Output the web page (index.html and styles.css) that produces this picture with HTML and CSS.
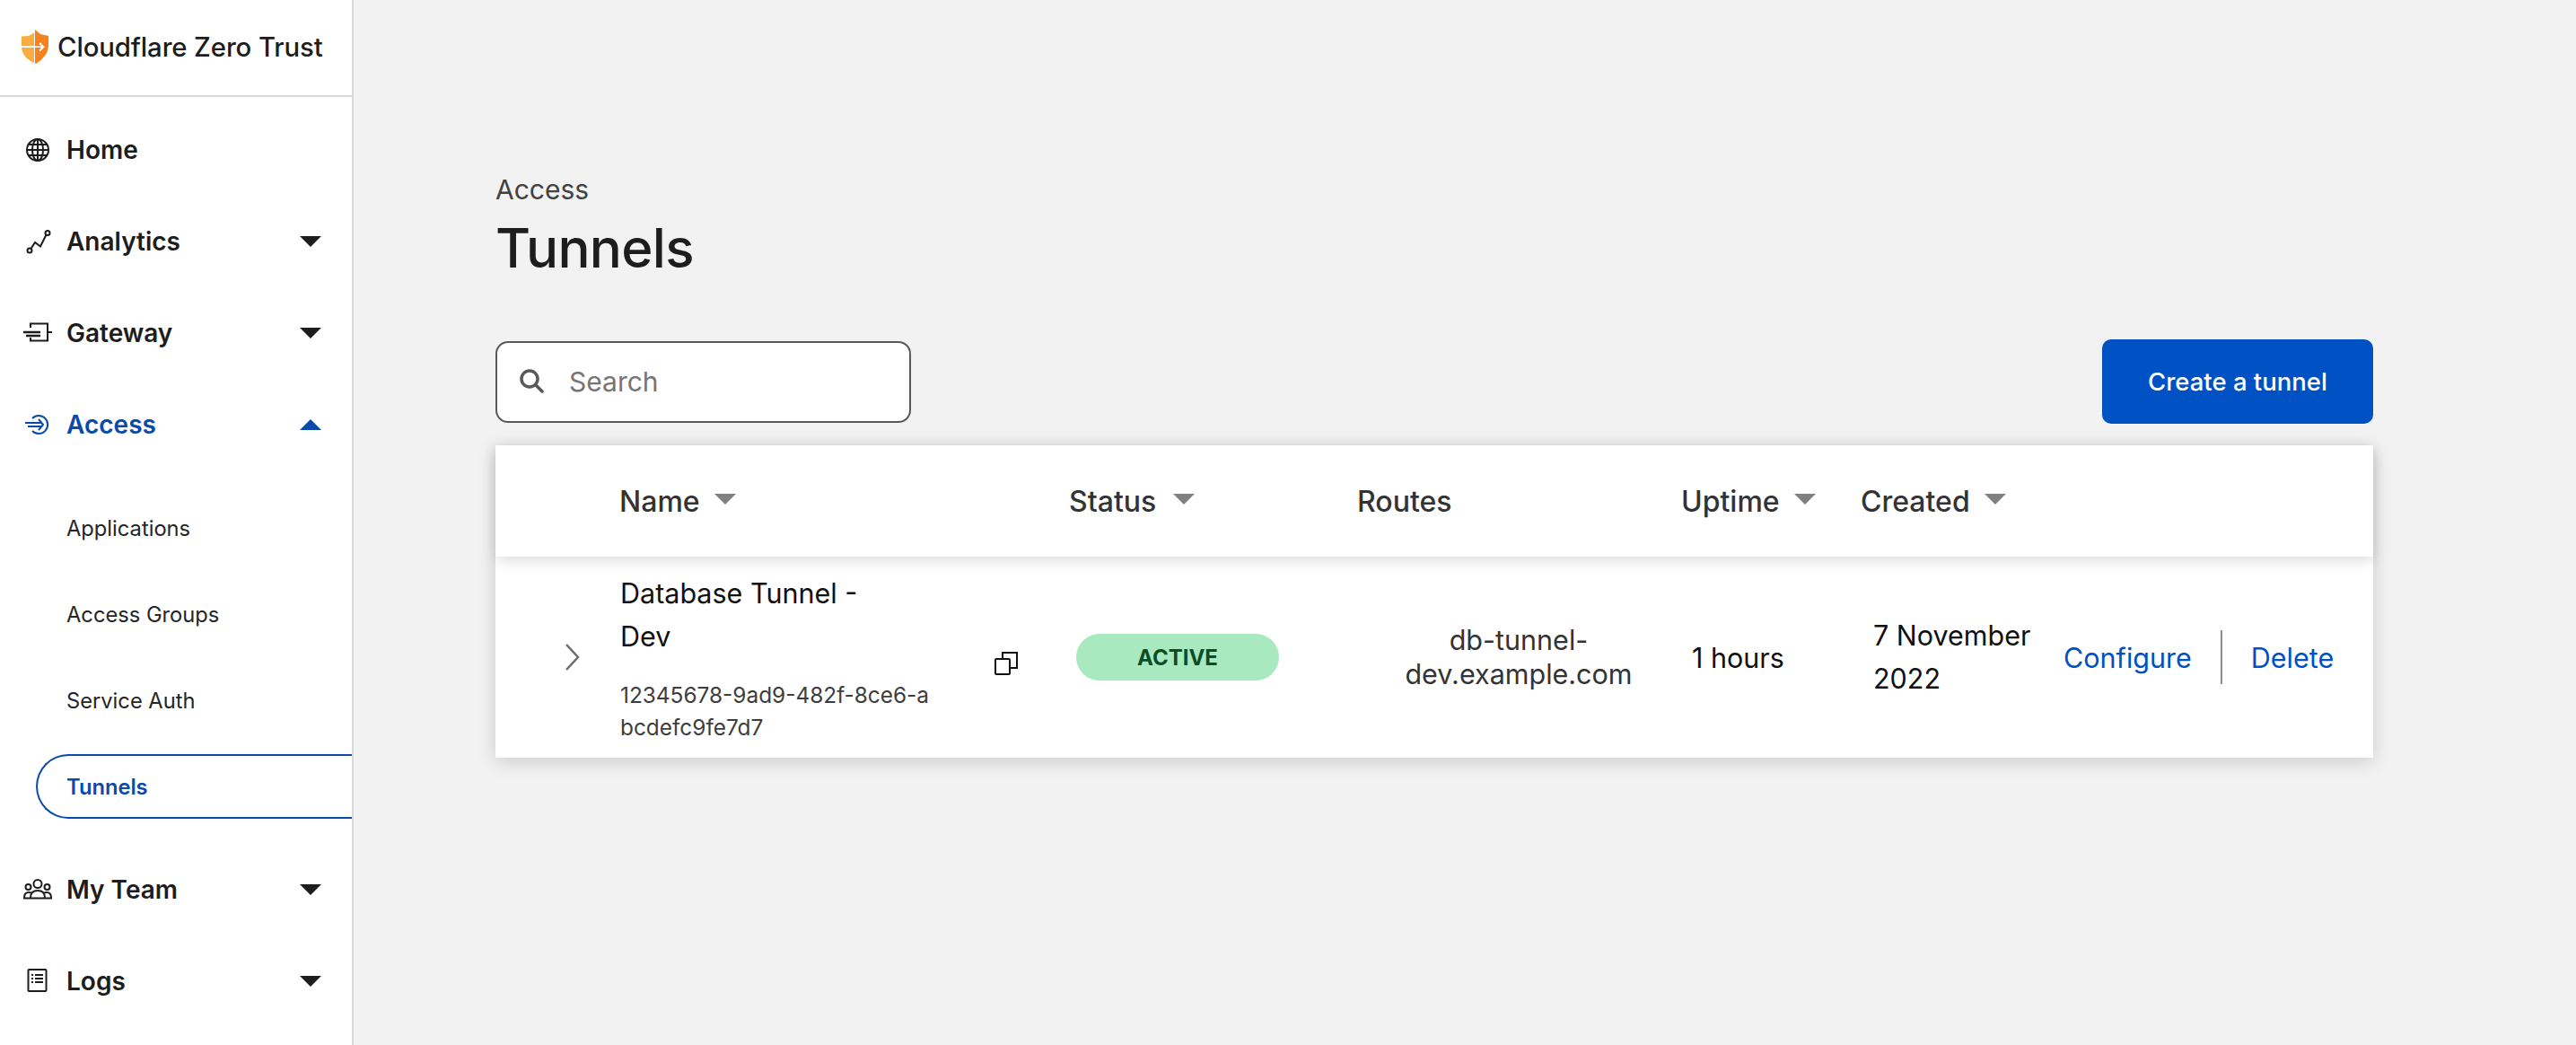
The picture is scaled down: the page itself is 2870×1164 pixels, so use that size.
FILE: index.html
```html
<!DOCTYPE html>
<html lang="en">
<head>
<meta charset="utf-8">
<title>Tunnels</title>
<link rel="stylesheet" href="styles.css">
</head>
<body>
<div class="app">
  <aside class="sidebar">
    <div class="brand">
      <svg class="logo" viewBox="0 0 30 38"><path fill="#FBAD41" d="M14 3.500 8 7 0 7.500V18h14zM0 20c.5 7 5 13 14 17V20z"/><path fill="#F6821F" d="M15 0l6 5 9 2v10c0 9-6 16-14 21l-1-.5V20h7l-2.500 3 1.300 1.200 5-5-5-5-1.300 1.200 2.500 3H15z"/></svg>
      <span class="brand-name">Cloudflare Zero Trust</span>
    </div>
    <nav class="nav">
      <a class="nav-item">
        <svg class="nav-icon" viewBox="0 0 32 32" fill="none" stroke="currentColor" stroke-width="2"><circle cx="16" cy="16" r="12"/><ellipse cx="16" cy="16" rx="6" ry="12"/><path d="M16 4v24M4 16h24M6 10h20M6 22h20"/></svg>
        <span class="nav-label">Home</span>
      </a>
      <a class="nav-item">
        <svg class="nav-icon" viewBox="0 0 32 32" fill="none" stroke="currentColor" stroke-width="2"><circle cx="7" cy="26" r="2.500"/><circle cx="27" cy="6.500" r="2.500"/><path d="M8.500 24 13 17l6 4.500 6.500-13"/></svg>
        <span class="nav-label">Analytics</span>
        <i class="caret"></i>
      </a>
      <a class="nav-item">
        <svg class="nav-icon" viewBox="0 0 32 32" fill="none" stroke="currentColor" stroke-width="2"><path d="M8 10V5.500h19v19H8V21M27 15h5"/><path stroke-width="2.500" d="M0 15h19M3 19h16"/></svg>
        <span class="nav-label">Gateway</span>
        <i class="caret"></i>
      </a>
      <a class="nav-item is-active">
        <svg class="nav-icon" viewBox="0 0 32 32" fill="none" stroke="currentColor" stroke-width="2"><path d="M10 9a10 10 0 1 1 0 14"/><path d="M2 14h19M5 18h16M17 10l5 6-5 6"/></svg>
        <span class="nav-label">Access</span>
        <i class="caret caret-up"></i>
      </a>
      <div class="subnav">
        <a class="sub-item">Applications</a>
        <a class="sub-item">Access Groups</a>
        <a class="sub-item">Service Auth</a>
        <a class="sub-item is-current">Tunnels</a>
      </div>
      <a class="nav-item">
        <svg class="nav-icon" viewBox="0 0 32 32" fill="none" stroke="currentColor" stroke-width="2"><circle cx="16" cy="9.500" r="4.500"/><circle cx="5.500" cy="13" r="3"/><circle cx="26.500" cy="13" r="3"/><path d="M0 25.500h32M1 25c0-4 2-6 5-6 1.500 0 2.500.4 3.500 1M31 25c0-4-2-6-5-6-1.500 0-2.500.4-3.500 1M8 25c0-5 3-8 8-8s8 3 8 8"/></svg>
        <span class="nav-label">My Team</span>
        <i class="caret"></i>
      </a>
      <a class="nav-item">
        <svg class="nav-icon" viewBox="0 0 32 32" fill="none" stroke="currentColor" stroke-width="2"><rect x="5.500" y="3" width="20" height="24" rx="1"/><path d="M9 9h2M13 9h9M9 13h2M13 13h9M9 17h2M13 17h9"/></svg>
        <span class="nav-label">Logs</span>
        <i class="caret"></i>
      </a>
    </nav>
  </aside>

  <main class="main">
    <p class="eyebrow">Access</p>
    <h1 class="title">Tunnels</h1>
    <div class="toolbar">
      <label class="search">
        <svg class="search-icon" viewBox="0 0 28 28" fill="none" stroke="#595959" stroke-width="3.500"><circle cx="12" cy="12" r="9"/><path stroke-linecap="round" d="m19 19 7 7"/></svg>
        <span class="search-text">Search</span>
      </label>
      <button class="primary">Create a tunnel</button>
    </div>
    <section class="table">
      <div class="thead cols">
        <div></div>
        <div class="th">Name<i class="sort"></i></div>
        <div class="th">Status<i class="sort sort-status"></i></div>
        <div class="th">Routes</div>
        <div class="th">Uptime<i class="sort"></i></div>
        <div class="th">Created<i class="sort"></i></div>
      </div>
      <div class="tbody cols">
        <div class="cell-toggle">
          <svg class="chev" viewBox="0 0 18 32" fill="none" stroke="#6b6b6b" stroke-width="2.500"><path d="m3 2 13 14L3 30"/></svg>
        </div>
        <div class="cell-name">
          <div class="name-block">
            <div class="tunnel-name">Database Tunnel - Dev</div>
            <div class="tunnel-id">12345678-9ad9-482f-8ce6-abcdefc9fe7d7</div>
          </div>
          <svg class="copy" viewBox="0 0 26 26" fill="none" stroke="#111" stroke-width="2"><rect x="1" y="8" width="16" height="17" rx="1"/><path d="M9 8V1h16v17h-8"/></svg>
        </div>
        <div class="cell-status"><span class="badge">ACTIVE</span></div>
        <div class="cell-routes"><div class="routes">db-tunnel-dev.example.com</div></div>
        <div class="cell-uptime">1 hours</div>
        <div class="cell-last">
          <div class="created">7 November 2022</div>
          <div class="actions">
            <a class="link">Configure</a>
            <span class="divider"></span>
            <a class="link">Delete</a>
          </div>
        </div>
      </div>
    </section>
  </main>
</div>
</body>
</html>
```
FILE: styles.css
```css
* { box-sizing: border-box; }
html, body { margin: 0; height: 100%; overflow: hidden; }
body { font-family: Inter, "Liberation Sans", sans-serif; color: #1d1d1d; background: #f2f2f2; }
.app { display: flex; height: 1164px; }

.sidebar { width: 394px; flex: none; background: #fff; border-right: 2px solid #d9d9d9; }
.brand { height: 108px; border-bottom: 2px solid #d9d9d9; display: flex; align-items: center; gap: 10px; padding: 0 0 2px 24px; }
.logo { width: 30px; height: 38px; flex: none; }
.brand-name { font-size: 29.300px; font-weight: 500; letter-spacing: -.1px; white-space: nowrap; }

.nav { display: flex; flex-direction: column; padding-top: 8px; }
.nav-item { height: 102px; display: flex; align-items: center; padding: 0 34px 0 26px; color: #1d1d1d; }
.nav-icon { width: 32px; height: 32px; flex: none; }
.nav-label { margin-left: 16px; font-size: 28px; font-weight: 600; flex: 1; }
.caret { width: 0; height: 0; border-left: 12.500px solid transparent; border-right: 12.500px solid transparent; border-top: 12px solid #1d1d1d; }
.caret-up { border-top: 0; border-bottom: 12px solid #0a4aa8; }
.is-active { color: #0a4aa8; }
.subnav { display: flex; flex-direction: column; padding: 16px 0 16px; }
.sub-item { height: 96px; display: flex; align-items: center; padding-left: 74px; font-size: 23.700px; color: #262626; }
.sub-item.is-current { height: 72px; margin: 12px 0; margin-left: 40px; padding-left: 32px; border: 2px solid #0a4aa8; border-right: 0; border-radius: 36px 0 0 36px; color: #0a4aa8; font-weight: 600; }

.main { flex: 1; min-width: 0; padding: 192px 226px 0 158px; }
.eyebrow { margin: 0; font-size: 30px; line-height: 38px; color: #424242; }
.title { margin: 8px 0 0; font-size: 60px; font-weight: 500; line-height: 76px; letter-spacing: -.7px; color: #1d1d1d; }
.toolbar { display: flex; justify-content: space-between; align-items: center; margin-top: 64px; height: 94px; }
.search { width: 463px; height: 91px; display: flex; align-items: center; gap: 28px; padding-left: 24px; background: #fff; border: 2px solid #595959; border-radius: 14px; }
.search-icon { width: 28px; height: 28px; flex: none; margin-top: -2px; }
.search-text { font-size: 30px; color: #757575; }
.primary { width: 302px; height: 94px; border: 0; border-radius: 10px; background: #0051c3; color: #fff; font: 500 27.500px Inter, sans-serif; }

.table { margin-top: 24px; background: #fff; box-shadow: 0 4px 20px rgba(0,0,0,.16); }
.cols { display: grid; grid-template-columns: 139px 501px 321px 361px 200px 570px; }
.thead { height: 124px; align-items: center; background: #fff; position: relative; box-shadow: 0 4px 14px rgba(0,0,0,.14); }
.th { display: flex; align-items: center; gap: 16px; font-size: 32px; font-weight: 500; color: #333; margin-left: -1px; }
.sort { width: 0; height: 0; border-left: 12.500px solid transparent; border-right: 12.500px solid transparent; border-top: 12px solid #808080; margin-top: -4px; }
.sort-status { margin-left: 3px; }
.tbody { height: 224px; align-items: center; font-size: 30.500px; color: #111; }
.cell-toggle { padding-left: 76px; }
.chev { display: block; width: 18px; height: 32px; }
.cell-name { display: flex; align-items: center; gap: 72px; height: 100%; }
.name-block { width: 345px; flex: none; align-self: flex-start; padding-top: 17px; }
.tunnel-name { line-height: 48px; width: 290px; }
.tunnel-id { margin-top: 23px; font-size: 24.400px; line-height: 36px; word-break: break-all; color: #3d3d3d; }
.copy { width: 26px; height: 26px; flex: none; margin-top: 14px; }
.cell-status { padding-left: 7px; }
.badge { display: flex; align-items: center; justify-content: center; width: 226px; height: 52px; border-radius: 26px; background: #a9e9bf; color: #0d4d26; font-size: 24px; font-weight: 700; }
.cell-routes { display: flex; justify-content: flex-end; padding-right: 52px; }
.routes { width: 260px; text-align: center; line-height: 38px; color: #333; }
.cell-uptime { padding-left: 11px; }
.cell-last { display: flex; align-items: center; padding-left: 13px; }
.created { width: 212px; line-height: 48px; }
.actions { display: flex; align-items: center; }
.link { color: #0051c3; }
.divider { width: 2px; height: 60px; background: #8c8c8c; margin: 0 32px 0 32px; }
```
